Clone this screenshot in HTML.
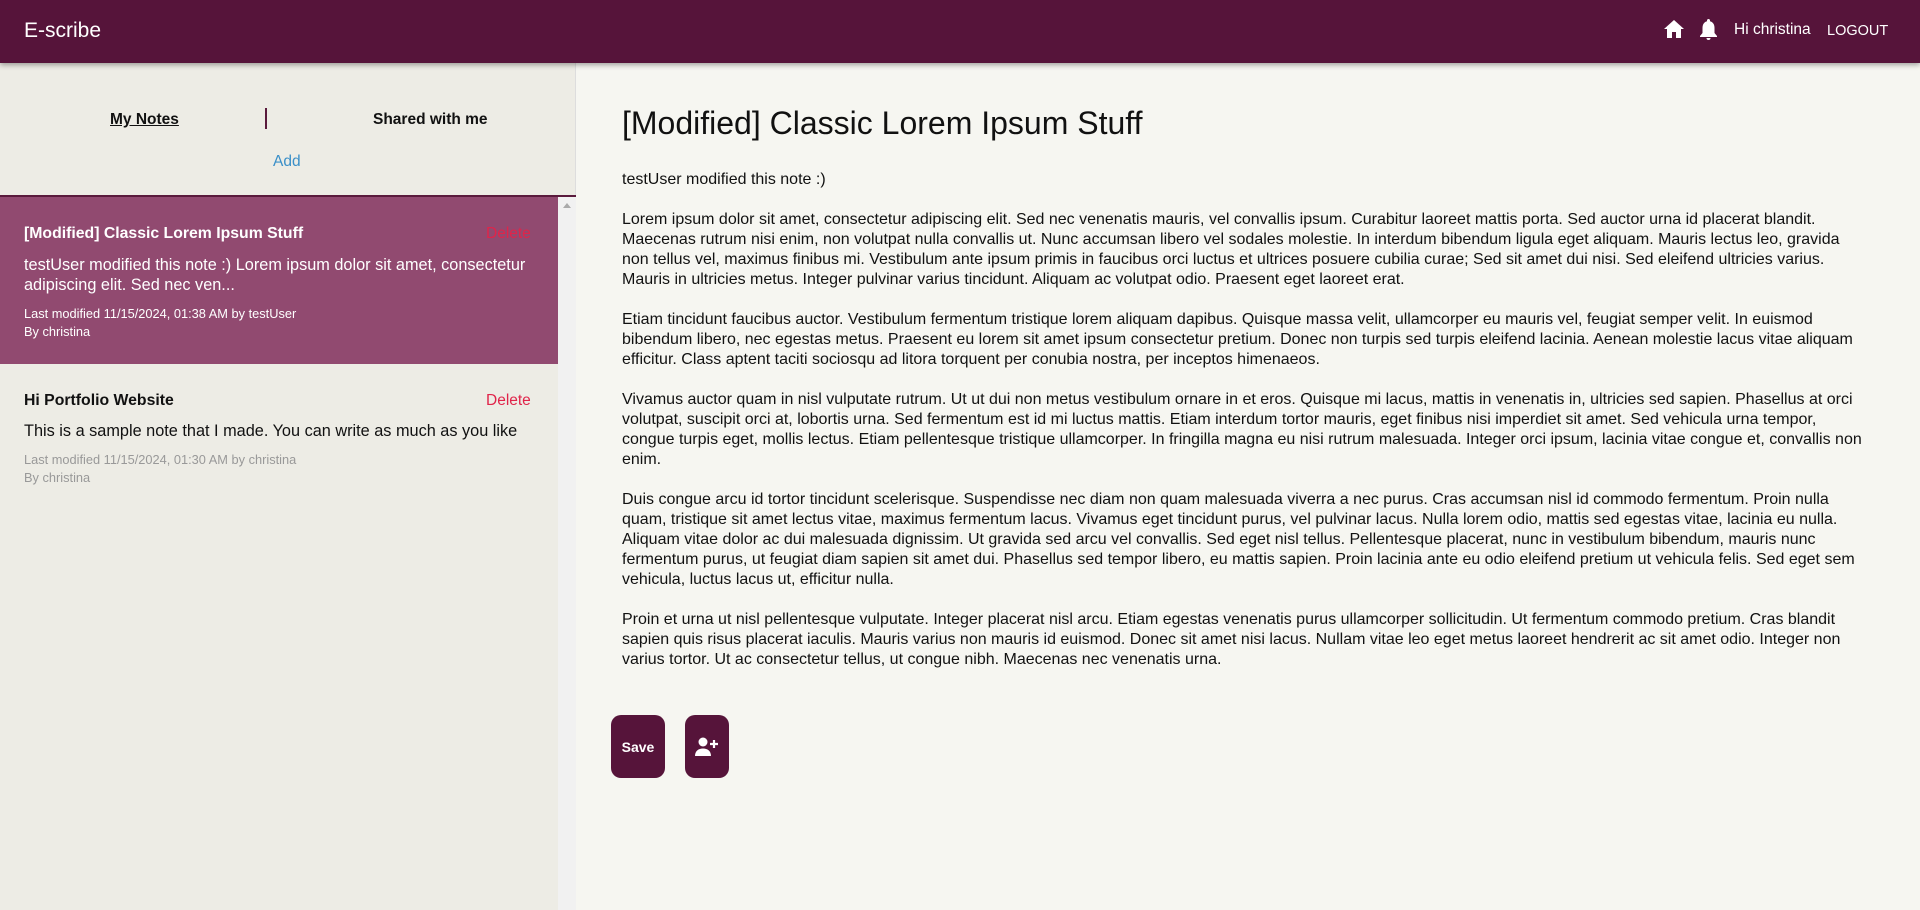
<!DOCTYPE html>
<html><head><meta charset="utf-8"><style>
*{box-sizing:border-box;margin:0;padding:0}
body{width:1920px;height:910px;overflow:hidden;background:#f6f6f1;font-family:"Liberation Sans",sans-serif;position:relative}
.hdr{position:absolute;left:0;top:0;width:1920px;height:63px;background:#56143a;color:#fff;box-shadow:0 2px 5px rgba(0,0,0,.35);z-index:2}
.logo{position:absolute;left:24px;top:19px;font-size:21px}
.side{position:absolute;left:0;top:63px;width:576px;height:847px;background:#edece5;border-right:1px solid #ddd}
.tab{position:absolute;top:48px;font-weight:bold;font-size:15.5px;color:#111}
.add{position:absolute;left:273px;top:90px;color:#3a8fc8;font-size:15.5px}
.line{position:absolute;left:0;top:132px;width:576px;height:2px;background:#5a1a3c}
.sb{position:absolute;left:558px;top:134px;width:18px;height:713px;background:#f1f1f1}
.main{position:absolute;left:622px;top:0;width:1250px}
h1{position:absolute;top:105px;font-size:32px;font-weight:normal;color:#111;white-space:nowrap}
.body{position:absolute;top:170px;width:1248px;font-size:16px;line-height:20px;color:#111}
.body p{margin-bottom:20px}
.btn{position:absolute;top:715px;height:63px;background:#56143a;border-radius:10px;color:#fff;font-weight:bold;font-size:14px;display:flex;align-items:center;justify-content:center}
</style></head><body>
<div class="hdr"><div class="logo">E-scribe</div>
<svg style="position:absolute;left:1664px;top:20px" width="20" height="18" viewBox="0 0 20 18"><path d="M10 0L0 9h3v9h5v-6h4v6h5V9h3z" fill="#fff"/></svg>
<svg style="position:absolute;left:1700px;top:19px" width="17" height="22" viewBox="0 0 17 22"><path d="M8.5 0c1 0 1.5.7 1.5 1.5v.8c3 .8 4.5 3.3 4.5 6.7v5l2.5 3v1H0v-1l2.5-3V9c0-3.4 1.5-5.9 4.5-6.7v-.8C7 .7 7.5 0 8.5 0zM6.5 19h4a2 2 0 0 1-4 0z" fill="#fff"/></svg>
<div style="position:absolute;left:1734px;top:21px;font-size:15.5px">Hi christina</div>
<div style="position:absolute;left:1827px;top:23px;font-size:14.5px">LOGOUT</div>
</div>
<div class="side">
<div class="tab" style="left:110px;text-decoration:underline">My Notes</div>
<div style="position:absolute;left:265px;top:45px;width:2px;height:21px;background:#5a1a3c"></div>
<div class="tab" style="left:373px">Shared with me</div>
<div class="add">Add</div>
<div class="line"></div>
<div class="sb"><div style="margin:6px auto 0;width:0;height:0;border-left:4px solid transparent;border-right:4px solid transparent;border-bottom:5px solid #aaa"></div></div>
<div style="position:absolute;left:0;top:134px;width:558px;height:167px;background:#914a70"></div>
<div style="position:absolute;left:24px;top:162px;font-size:15.8px;font-weight:bold;color:#fff">[Modified] Classic Lorem Ipsum Stuff</div>
<div style="position:absolute;left:486px;top:162px;font-size:15.5px;color:#e0244a">Delete</div>
<div style="position:absolute;left:24px;top:192px;width:520px;font-size:16.3px;line-height:20px;color:#fff">testUser modified this note :) Lorem ipsum dolor sit amet, consectetur adipiscing elit. Sed nec ven...</div>
<div style="position:absolute;left:24px;top:242px;font-size:12.8px;line-height:18px;color:#fff">Last modified 11/15/2024, 01:38 AM by testUser<br>By christina</div>
<div style="position:absolute;left:24px;top:329px;font-size:15.8px;font-weight:bold;color:#111">Hi Portfolio Website</div>
<div style="position:absolute;left:486px;top:329px;font-size:15.5px;color:#e0244a">Delete</div>
<div style="position:absolute;left:24px;top:358px;width:530px;font-size:16.3px;line-height:20px;color:#111">This is a sample note that I made. You can write as much as you like</div>
<div style="position:absolute;left:24px;top:388px;font-size:12.8px;line-height:18px;color:#999">Last modified 11/15/2024, 01:30 AM by christina<br>By christina</div>
</div>
<div class="main">
<h1>[Modified] Classic Lorem Ipsum Stuff</h1>
<div class="body">
<p>testUser modified this note :)</p>
<p>Lorem ipsum dolor sit amet, consectetur adipiscing elit. Sed nec venenatis mauris, vel convallis ipsum. Curabitur laoreet mattis porta. Sed auctor urna id placerat blandit. Maecenas rutrum nisi enim, non volutpat nulla convallis ut. Nunc accumsan libero vel sodales molestie. In interdum bibendum ligula eget aliquam. Mauris lectus leo, gravida non tellus vel, maximus finibus mi. Vestibulum ante ipsum primis in faucibus orci luctus et ultrices posuere cubilia curae; Sed sit amet dui nisi. Sed eleifend ultricies varius. Mauris in ultricies metus. Integer pulvinar varius tincidunt. Aliquam ac volutpat odio. Praesent eget laoreet erat.</p>
<p>Etiam tincidunt faucibus auctor. Vestibulum fermentum tristique lorem aliquam dapibus. Quisque massa velit, ullamcorper eu mauris vel, feugiat semper velit. In euismod bibendum libero, nec egestas metus. Praesent eu lorem sit amet ipsum consectetur pretium. Donec non turpis sed turpis eleifend lacinia. Aenean molestie lacus vitae aliquam efficitur. Class aptent taciti sociosqu ad litora torquent per conubia nostra, per inceptos himenaeos.</p>
<p>Vivamus auctor quam in nisl vulputate rutrum. Ut ut dui non metus vestibulum ornare in et eros. Quisque mi lacus, mattis in venenatis in, ultricies sed sapien. Phasellus at orci volutpat, suscipit orci at, lobortis urna. Sed fermentum est id mi luctus mattis. Etiam interdum tortor mauris, eget finibus nisi imperdiet sit amet. Sed vehicula urna tempor, congue turpis eget, mollis lectus. Etiam pellentesque tristique ullamcorper. In fringilla magna eu nisi rutrum malesuada. Integer orci ipsum, lacinia vitae congue et, convallis non enim.</p>
<p>Duis congue arcu id tortor tincidunt scelerisque. Suspendisse nec diam non quam malesuada viverra a nec purus. Cras accumsan nisl id commodo fermentum. Proin nulla quam, tristique sit amet lectus vitae, maximus fermentum lacus. Vivamus eget tincidunt purus, vel pulvinar lacus. Nulla lorem odio, mattis sed egestas vitae, lacinia eu nulla. Aliquam vitae dolor ac dui malesuada dignissim. Ut gravida sed arcu vel convallis. Sed eget nisl tellus. Pellentesque placerat, nunc in vestibulum bibendum, mauris nunc fermentum purus, ut feugiat diam sapien sit amet dui. Phasellus sed tempor libero, eu mattis sapien. Proin lacinia ante eu odio eleifend pretium ut vehicula felis. Sed eget sem vehicula, luctus lacus ut, efficitur nulla.</p>
<p>Proin et urna ut nisl pellentesque vulputate. Integer placerat nisl arcu. Etiam egestas venenatis purus ullamcorper sollicitudin. Ut fermentum commodo pretium. Cras blandit sapien quis risus placerat iaculis. Mauris varius non mauris id euismod. Donec sit amet nisi lacus. Nullam vitae leo eget metus laoreet hendrerit ac sit amet odio. Integer non varius tortor. Ut ac consectetur tellus, ut congue nibh. Maecenas nec venenatis urna.</p>
</div>
</div>
<div class="btn" style="left:611px;width:54px">Save</div>
<div class="btn" style="left:685px;width:44px"><svg width="24" height="20" viewBox="0 0 24 20"><circle cx="8" cy="5" r="4.5" fill="#fff"/><path d="M0 19c0-5 3.5-7.5 8-7.5s8 2.5 8 7.5z" fill="#fff"/><path d="M19 3v8M15 7h8" stroke="#fff" stroke-width="2.2"/></svg></div>
</body></html>
